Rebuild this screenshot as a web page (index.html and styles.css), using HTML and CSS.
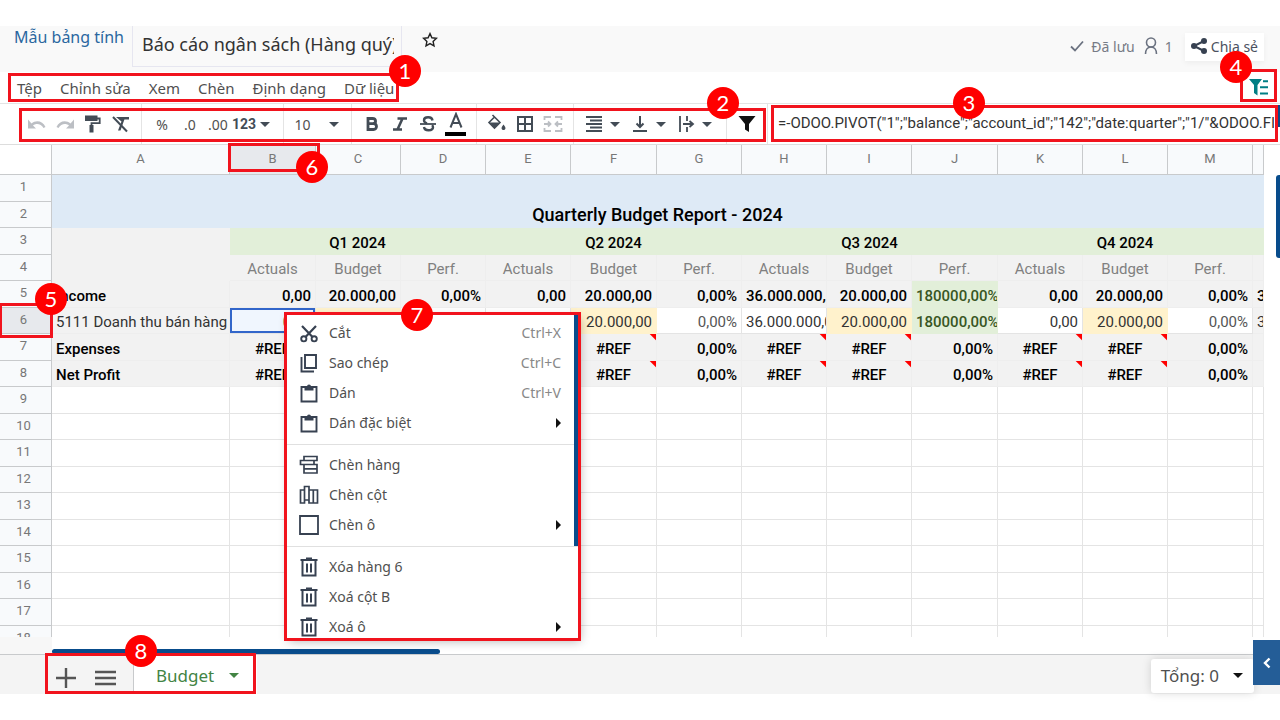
FILE: index.html
```html
<!DOCTYPE html>
<html lang="vi">
<head>
  <meta charset="UTF-8">
  <meta name="viewport" content="width=device-width, initial-scale=1.0">
  <title>Báo cáo ngân sách</title>
  <link rel="stylesheet" href="styles.css">
</head>
<body>
  <div class="app">
    <header class="topbar">
      <a href="#" class="breadcrumb">Mẫu bảng tính</a>
      <input class="doc-name" type="text" aria-label="Tên bảng tính" value="Báo cáo ngân sách (Hàng quý)">
      <button class="star-btn" aria-label="Yêu thích">
        <svg width="16" height="16" viewBox="0 0 16 16"><path d="M8 1.6l1.9 4.2 4.5.5-3.3 3.1.9 4.5L8 11.6l-4 2.3.9-4.5L1.6 6.3l4.5-.5z" fill="none" stroke="#222" stroke-width="1.4"/></svg>
      </button>
      <div class="status">
        <svg width="14" height="12" viewBox="0 0 14 12"><path d="M1 6.5l4 4L13 1.5" fill="none" stroke="#6b7280" stroke-width="1.8"/></svg>
        <span class="saved">Đã lưu</span>
        <svg width="14" height="18" viewBox="0 0 14 18"><circle cx="7" cy="5.5" r="4.5" fill="none" stroke="#6b7280" stroke-width="1.6"/><path d="M1.5 17c0-4 2-7 5.5-7s5.5 3 5.5 7" fill="none" stroke="#6b7280" stroke-width="1.6"/></svg>
        <span>1</span>
      </div>
      <button class="share-btn">
        <svg width="16" height="16" viewBox="0 0 16 16"><path d="M13 3L3 8l10 5" fill="none" stroke="#374151" stroke-width="2"/><circle cx="13" cy="3" r="3" fill="#374151"/><circle cx="3" cy="8" r="3" fill="#374151"/><circle cx="13" cy="13" r="3" fill="#374151"/></svg>
        Chia sẻ
      </button>
    </header>

    <nav class="menubar">
      <button>Tệp</button>
      <button>Chỉnh sửa</button>
      <button>Xem</button>
      <button>Chèn</button>
      <button>Định dạng</button>
      <button>Dữ liệu</button>
      <button class="filter-toggle" aria-label="Bộ lọc">
        <svg width="20" height="17" viewBox="0 0 20 17"><path d="M0 0h13L8.500 6v10.500L5 14V6z" fill="#017e84"/><path d="M14 2.200h5M11 8.200h8M11 14.500h8" stroke="#017e84" stroke-width="2"/></svg>
      </button>
    </nav>

    <div class="toolbar">
      <div class="group">
        <button class="tool" aria-label="Hoàn tác"><svg width="20" height="20" viewBox="0 0 20 20"><path d="M1 5.500v9h8l-3-3c3-2.500 8-2 10.500 2.500l2-1C16 7 9 5.500 4.500 9.500z" fill="#bcbfc4"/></svg></button>
        <button class="tool" aria-label="Làm lại"><svg width="20" height="20" viewBox="0 0 20 20"><path d="M19 5.500v9h-8l3-3c-3-2.500-8-2-10.500 2.500l-2-1C4 7 11 5.500 15.500 9.500z" fill="#bcbfc4"/></svg></button>
        <button class="tool" aria-label="Sao chép định dạng"><svg width="20" height="20" viewBox="0 0 20 20"><path d="M14 4.500h2.700v4.700H8.500V12" fill="none" stroke="#434c56" stroke-width="1.800"/><path d="M2 1.500h12.500v5.500H2zM6.500 11h4v7.500h-4z" fill="#434c56"/></svg></button>
        <button class="tool" aria-label="Xóa định dạng"><svg width="20" height="20" viewBox="0 0 20 20"><path d="M5 3h13v2.600h-4.600L9.500 16.500H7l3.500-9z" fill="#434c56"/><path d="M2 3l14 14.500" stroke="#434c56" stroke-width="2"/></svg></button>
      </div>
      <div class="group">
        <button class="tool text">%</button>
        <button class="tool text">.0</button>
        <button class="tool text">.00</button>
        <button class="tool number">123<i class="caret"></i></button>
      </div>
      <div class="group size-group">
        <button class="tool font-size">10<i class="caret"></i></button>
      </div>
      <div class="group">
        <button class="tool" aria-label="Đậm"><svg width="20" height="20" viewBox="0 0 20 20"><path d="M6 4.500h4.500c4 0 4 5 .5 5.200H6zm0 5.200h5.500c4 0 4 5.800 0 5.800H6z" fill="none" stroke="#434c56" stroke-width="2.800"/></svg></button>
        <button class="tool" aria-label="Nghiêng"><svg width="20" height="20" viewBox="0 0 20 20"><path d="M7.500 4.500H17M3 15.500h9M12.500 4.500l-5 11" fill="none" stroke="#434c56" stroke-width="2.600"/></svg></button>
        <button class="tool" aria-label="Gạch ngang"><svg width="20" height="20" viewBox="0 0 20 20"><path d="M14.500 6.500C14 2 6 2.500 6 6.200c0 1.600 1.200 2.600 3 3.200M6 13c.5 4.500 9 4 9 .2 0-.9-.4-1.600-1-2.100" fill="none" stroke="#434c56" stroke-width="2.400"/><path d="M2 10h16" stroke="#434c56" stroke-width="1.800"/></svg></button>
        <button class="tool" aria-label="Màu chữ"><svg width="22" height="24" viewBox="0 0 22 24"><path d="M5.500 15.500L11 2l5.500 13.500M7.500 11h7" fill="none" stroke="#434c56" stroke-width="2"/><path d="M0 20h21v4H0z" fill="#000"/></svg></button>
      </div>
      <div class="group">
        <button class="tool" aria-label="Màu nền"><svg width="20" height="20" viewBox="0 0 20 20"><path d="M5.500 1l7.500 7.500-5.500 5.500L2 8.500l5-5" fill="none" stroke="#434c56" stroke-width="1.600"/><path d="M2 8.500h11L7.500 14z" fill="#434c56"/><path d="M16.500 10.500c3.500 4 1.500 5.500 0 5.500s-3.500-1.500 0-5.500z" fill="#434c56"/></svg></button>
        <button class="tool" aria-label="Viền"><svg width="20" height="20" viewBox="0 0 20 20"><path d="M3 3h14v14H3zM10 3v14M3 10h14" fill="none" stroke="#434c56" stroke-width="2"/></svg></button>
        <button class="tool" aria-label="Gộp ô"><svg width="20" height="20" viewBox="0 0 20 20"><path d="M1.500 6V3H8M12 3h6.500v3M1.500 14v3H8M12 17h6.500v-3M1 10h6M19 10h-6M5 7.500L7.500 10 5 12.500M15 7.500L12.500 10l2.500 2.500" fill="none" stroke="#bcbfc4" stroke-width="1.800"/></svg></button>
      </div>
      <div class="group drops">
        <button class="tool" aria-label="Căn ngang"><svg width="20" height="20" viewBox="0 0 20 20"><path d="M2 3h16M6 6.500h12M2 10h16M6 13.500h12M2 17h16" stroke="#434c56" stroke-width="1.800"/></svg><i class="caret"></i></button>
        <button class="tool" aria-label="Căn dọc"><svg width="20" height="20" viewBox="0 0 20 20"><path d="M3 17h14M10 2v11M6.500 9.500L10 13l3.500-3.500" fill="none" stroke="#434c56" stroke-width="2"/></svg><i class="caret"></i></button>
        <button class="tool" aria-label="Ngắt dòng"><svg width="20" height="20" viewBox="0 0 20 20"><path d="M4 2v16M11 2v5M11 13v5M7 10h9M13.500 7l3.500 3-3.500 3" fill="none" stroke="#434c56" stroke-width="1.800"/></svg><i class="caret"></i></button>
      </div>
      <div class="group">
        <button class="tool" aria-label="Lọc"><svg width="20" height="20" viewBox="0 0 20 20"><path d="M1.500 2h17L12 10v8l-4-2.500V10z" fill="#111"/></svg></button>
      </div>
      <input class="formula" type="text" aria-label="Công thức" value='=-ODOO.PIVOT("1";"balance";"account_id";"142";"date:quarter";"1/"&amp;ODOO.FIL'>
    </div>

    <main class="sheet">
      <div class="grid-area">
        <table class="grid">
          <colgroup id="cols"></colgroup>
          <thead><tr id="head"></tr></thead>
          <tbody id="rows"></tbody>
        </table>
      </div>
      <div class="v-track"><div class="v-thumb"></div></div>
      <div class="h-track"><div class="h-thumb"></div></div>
    </main>

    <footer class="bottombar">
      <button class="sheet-btn" aria-label="Thêm trang"><svg width="22" height="22" viewBox="0 0 22 22"><path d="M11 1v20M1 11h20" stroke="#555" stroke-width="2.400"/></svg></button>
      <button class="sheet-btn" aria-label="Danh sách trang"><svg width="22" height="22" viewBox="0 0 22 22"><path d="M1 5h21M1 11h21M1 17h21" stroke="#555" stroke-width="2.400"/></svg></button>
      <button class="sheet-tab">Budget<i class="caret"></i></button>
      <button class="total">Tổng: 0<i class="caret"></i></button>
    </footer>

    <div class="context-menu">
      <div class="menu-group">
        <button><svg width="20" height="20" viewBox="0 0 20 20"><path d="M3 3l10.500 11M17 3L6.500 14" stroke="#374151" stroke-width="2.200"/><circle cx="4.800" cy="15.800" r="2.600" fill="none" stroke="#374151" stroke-width="1.900"/><circle cx="15.200" cy="15.800" r="2.600" fill="none" stroke="#374151" stroke-width="1.900"/></svg><span>Cắt</span><kbd>Ctrl+X</kbd></button>
        <button><svg width="20" height="20" viewBox="0 0 20 20"><path d="M6 2h11v13H6zM2.500 4v14.500H15" fill="none" stroke="#374151" stroke-width="1.900"/></svg><span>Sao chép</span><kbd>Ctrl+C</kbd></button>
        <button><svg width="20" height="20" viewBox="0 0 20 20"><path d="M2.500 4h15v14.500h-15z" fill="none" stroke="#374151" stroke-width="1.900"/><path d="M5.500 3.500H8a2 2 0 0 1 4 0h2.500V7.500h-9z" fill="#374151"/></svg><span>Dán</span><kbd>Ctrl+V</kbd></button>
        <button><svg width="20" height="20" viewBox="0 0 20 20"><path d="M2.500 4h15v14.500h-15z" fill="none" stroke="#374151" stroke-width="1.900"/><path d="M5.500 3.500H8a2 2 0 0 1 4 0h2.500V7.500h-9z" fill="#374151"/></svg><span>Dán đặc biệt</span><i class="arrow"></i></button>
      </div>
      <div class="menu-group">
        <button><svg width="20" height="20" viewBox="0 0 20 20"><path d="M5 1.500h13v4H5zM1.500 5.500H15v4H1.500zM5 9.500h13v4.300H5zM5 13.800h13v4.200H5z" fill="none" stroke="#374151" stroke-width="1.700"/></svg><span>Chèn hàng</span></button>
        <button><svg width="20" height="20" viewBox="0 0 20 20"><path d="M1.500 5h4v13h-4zM5.500 1.500h4.500V15H5.500zM10 5h4.300v13H10zM14.300 5h4.200v13h-4.200z" fill="none" stroke="#374151" stroke-width="1.700"/></svg><span>Chèn cột</span></button>
        <button><svg width="20" height="20" viewBox="0 0 20 20"><path d="M1 1h18v18H1z" fill="none" stroke="#374151" stroke-width="1.800"/></svg><span>Chèn ô</span><i class="arrow"></i></button>
      </div>
      <div class="menu-group">
        <button><svg width="20" height="20" viewBox="0 0 20 20"><path d="M3.500 3.500v15h13v-15M1.500 3h17M7 1.500h6M8 6.500v9M12 6.500v9" fill="none" stroke="#374151" stroke-width="2"/></svg><span>Xóa hàng 6</span></button>
        <button><svg width="20" height="20" viewBox="0 0 20 20"><path d="M3.500 3.500v15h13v-15M1.500 3h17M7 1.500h6M8 6.500v9M12 6.500v9" fill="none" stroke="#374151" stroke-width="2"/></svg><span>Xoá cột B</span></button>
        <button><svg width="20" height="20" viewBox="0 0 20 20"><path d="M3.500 3.500v15h13v-15M1.500 3h17M7 1.500h6M8 6.500v9M12 6.500v9" fill="none" stroke="#374151" stroke-width="2"/></svg><span>Xoá ô</span><i class="arrow"></i></button>
      </div>
      <div class="menu-thumb"></div>
    </div>

    <div class="f-thumb"></div>
    <button class="side-toggle" aria-label="Mở bảng bên"><svg width="10" height="12" viewBox="0 0 10 12"><path d="M7.500 1.500L3 6l4.500 4.500" fill="none" stroke="#fff" stroke-width="2.400"/></svg></button>

    <div class="mark mark-1"><b>1</b></div>
    <div class="mark mark-2"><b>2</b></div>
    <div class="mark mark-3"><b>3</b></div>
    <div class="mark mark-4"><b>4</b></div>
    <div class="mark mark-5"><b>5</b></div>
    <div class="mark mark-6"><b>6</b></div>
    <div class="mark mark-7"><b>7</b></div>
    <div class="mark mark-8"><b>8</b></div>
  </div>

  <script>
    const letters = "ABCDEFGHIJKLMN".split("");
    const zero = "0,00";
    const budget = "20.000,00";
    const pct = "0,00%";
    const big = "36.000.000,00";
    const jump = "180000,00%";

    // [text, classes, colspan]
    const quarters = ["Q1 2024", "Q2 2024", "Q3 2024", "Q4 2024"].map(q => [q, "green bold center", 3]);
    const labels = [];
    for (let i = 0; i < 4; i++) {
      labels.push(["Actuals", "grey label"], ["Budget", "grey label"], ["Perf.", "grey label"]);
    }
    const n = "grey bold num";
    const refs = [];
    for (let i = 0; i < 4; i++) {
      refs.push(["#REF", "grey bold error"], ["#REF", "grey bold error"], [pct, n]);
    }

    const data = [
      [["", "blue", 14]],
      [["Quarterly Budget Report - 2024", "blue title", 14]],
      [["", "grey blank"], ...quarters, ["", "green"]],
      [["", "grey blank"], ...labels, ["", "grey"]],
      [["Income", "grey bold"], [zero, n], [budget, n], [pct, n], [zero, n], [budget, n], [pct, n],
        [big, "grey bold"], [budget, n], [jump, "good"], [zero, n], [budget, n], [pct, n], ["36", "grey bold"]],
      [["5111 Doanh thu bán hàng", "grey"], [zero, "num selected"], [budget, "num yellow"], [pct, "num"], [zero, "num"],
        [budget, "num yellow"], [pct, "num soft"], [big, ""], [budget, "num yellow"], [jump, "good"], [zero, "num"],
        [budget, "num yellow"], [pct, "num soft"], ["36", "grey"]],
      [["Expenses", "grey bold"], ...refs, ["", "grey"]],
      [["Net Profit", "grey bold"], ...refs, ["", "grey"]]
    ];

    const cols = document.getElementById("cols");
    cols.innerHTML = '<col class="col-index"><col class="col-a">' + '<col class="col-n">'.repeat(12) + "<col>";

    const head = document.getElementById("head");
    head.appendChild(document.createElement("td"));
    letters.forEach(letter => {
      const th = document.createElement("th");
      th.textContent = letter === "N" ? "" : letter;
      if (letter === "B") th.className = "active";
      head.appendChild(th);
    });

    const rows = document.getElementById("rows");
    for (let r = 0; r < 18; r++) {
      const tr = document.createElement("tr");
      const th = document.createElement("th");
      th.textContent = r + 1;
      if (r === 5) th.className = "active";
      tr.appendChild(th);
      const cells = data[r] || letters.map(() => ["", ""]);
      cells.forEach(([text, cls, span]) => {
        const td = document.createElement("td");
        td.textContent = text;
        td.className = cls;
        if (span) td.colSpan = span;
        tr.appendChild(td);
      });
      rows.appendChild(tr);
    }
  </script>
</body>
</html>
```
FILE: styles.css
```css
* {
  box-sizing: border-box;
}

body {
  margin: 0;
  background: #fff;
  color: #505050;
  font-family: "Noto Sans", sans-serif;
  font-size: 14px;
}

button,
input {
  margin: 0;
  padding: 0;
  border: none;
  background: none;
  color: inherit;
  font: inherit;
}

button {
  display: flex;
  align-items: center;
  justify-content: center;
  white-space: nowrap;
  cursor: pointer;
}

svg {
  display: block;
  flex: none;
}

.app {
  position: relative;
  display: flex;
  flex-direction: column;
  height: 100vh;
  padding: 26px 0;
  overflow: hidden;
}

/* top bar */
.topbar {
  display: flex;
  align-items: flex-start;
  flex: none;
  height: 46px;
  padding: 0 16px 0 14px;
  background: #f9f9f9;
}

.breadcrumb {
  width: 118px;
  color: #2a679f;
  font-size: 16px;
  line-height: 22px;
  white-space: nowrap;
  text-decoration: none;
}

.doc-name {
  width: 270px;
  height: 41px;
  padding: 0 7px 4px 9px;
  border: 1px solid #e6e6f0;
  border-top: none;
  color: #333;
  font-size: 18px;
}

.star-btn {
  margin: 6px 0 0 20px;
}

.status {
  display: flex;
  align-items: center;
  gap: 7px;
  height: 40px;
  margin-left: auto;
  color: #777b86;
}

.saved {
  margin-right: 2px;
}

.share-btn {
  gap: 4px;
  height: 28px;
  margin: 7px 0 0 12px;
  padding: 0 6px 2px;
  background: #fff;
  box-shadow: 0 2px 6px #0000000d;
  color: #4b5160;
}

/* menus */
.menubar {
  display: flex;
  align-items: center;
  flex: none;
  gap: 18px;
  height: 32px;
  padding: 0 11px 0 17px;
  border-bottom: 1px solid #e4e4e4;
  font-size: 15px;
}

.filter-toggle {
  margin-left: auto;
}

/* toolbar */
.toolbar {
  display: flex;
  flex: none;
  height: 41px;
  padding: 0 6px 0 17px;
  border-bottom: 1px solid #ddd;
}

.group {
  display: flex;
  align-items: center;
  flex: none;
  padding: 0 6px;
  border-right: 1px solid #e4e4e4;
}

.tool {
  width: 28px;
  height: 30px;
}

.number {
  width: 38px;
  margin-right: 7px;
  gap: 4px;
  color: #434c56;
  font-family: Roboto, sans-serif;
  font-weight: bold;
}

.font-size {
  width: 55px;
  gap: 18px;
}

.size-group {
  padding: 0 7px 0 5px;
}

.drops {
  gap: 2px;
  padding-right: 10px;
}

.drops .tool {
  width: 44px;
  gap: 6px;
}

.caret {
  flex: none;
  border: 5px solid transparent;
  border-top-color: #434c56;
  border-bottom: none;
}

.formula {
  flex: 1;
  min-width: 0;
  margin: 0;
  padding: 0 0 2px 10px;
  color: #333;
  font-family: Roboto, sans-serif;
  font-size: 15px;
}

/* spreadsheet */
.sheet {
  display: grid;
  grid-template: 1fr 17px / 1fr 16px;
  flex: 1;
  min-height: 0;
}

.grid-area {
  overflow: hidden;
}

.grid {
  width: 100%;
  table-layout: fixed;
  border-collapse: separate;
  border-spacing: 0;
  color: #333;
  font-family: Roboto, sans-serif;
  font-size: 15px;
}

.col-index {
  width: 52px;
}

.col-a {
  width: 178px;
}

.col-n {
  width: 85px;
}

.col-n:nth-child(4n + 3) {
  width: 86px;
}

.grid th {
  padding: 0 4px 3px 0;
  border-right: 1px solid #c8cacc;
  border-bottom: 1px solid #c8cacc;
  background: #f8fafc;
  color: #777;
  font-size: 13px;
  font-weight: normal;
}

.grid thead tr {
  height: 30px;
}

.grid thead td {
  border-color: #c8cacc;
}

.grid thead th {
  padding: 0 0 2px;
}

.grid th.active {
  background: #e7e9ed;
}

.grid tbody tr {
  height: 27px;
}

.grid tbody tr:nth-child(even) {
  height: 26px;
}

.grid td {
  position: relative;
  padding: 3px 4px 0;
  border-right: 1px solid #e4e4e4;
  border-bottom: 1px solid #e4e4e4;
  line-height: 20px;
  white-space: nowrap;
  overflow: hidden;
}

.grid .blue {
  border-color: #deeaf6;
  background: #deeaf6;
}

.grid .title {
  padding-top: 0;
  color: #000;
  font-size: 18px;
  font-weight: 500;
  text-align: center;
}

.grid .grey {
  border-color: #eee;
  background: #f2f2f2;
}

.grid .blank {
  border-color: #f2f2f2;
}

.grid .green {
  border-color: #e2efd9;
  background: #e2efd9;
}

.grid .yellow {
  border-color: #fff2cc;
  background: #fff2cc;
}

.grid .good {
  border-color: #e2efd9;
  background: #e2efd9;
  color: #385623;
  font-weight: 500;
}

.grid .bold {
  color: #000;
  font-weight: 500;
}

.grid .center {
  text-align: center;
}

.grid .label {
  color: #808080;
  text-align: center;
}

.grid .num {
  text-align: right;
}

.grid .soft {
  color: #555;
}

.grid .error {
  background: linear-gradient(225deg, #f00 4px, #f2f2f2 5px);
  text-align: center;
}

.grid .selected {
  background: #f0f6fe;
  box-shadow: inset 0 0 0 2px #3266ca;
}

.v-track {
  padding: 30px 0 0 12px;
}

.v-thumb {
  height: 83px;
  border-radius: 3px 0 0 3px;
  background: #084c8c;
}

.h-track {
  display: flex;
  align-items: flex-end;
  grid-column: 1 / 3;
  border-left: 52px solid #f7f7f7;
}

.h-thumb {
  width: 388px;
  height: 5px;
  border-radius: 3px;
  background: #084c8c;
}

/* bottom bar */
.bottombar {
  display: flex;
  flex: none;
  height: 40px;
  padding-left: 46px;
  border-top: 1px solid #c8cacc;
  background: #f4f4f4;
}

.sheet-btn {
  width: 39px;
  padding-top: 6px;
}

.sheet-tab {
  gap: 15px;
  margin-left: 9px;
  padding: 2px 18px 0 22px;
  border-left: 1px solid #c8cacc;
  background: #fff;
  color: #428444;
  font-size: 17px;
}

.sheet-tab .caret {
  border-top-color: #428444;
}

.total {
  gap: 14px;
  height: 34px;
  margin: 4px 26px 0 auto;
  padding: 0 11px 2px 10px;
  border-radius: 3px;
  background: #fff;
  box-shadow: 0 0 10px #00000026;
  font-size: 17px;
}

.total .caret {
  border-top-color: #111;
}

/* context menu */
.context-menu {
  position: absolute;
  top: 315px;
  left: 287px;
  width: 291px;
  height: 323px;
  padding-top: 3px;
  overflow: hidden;
  background: #fff;
  box-shadow: 2px 3px 10px #0000004d;
}

.menu-group + .menu-group {
  margin-top: 6px;
  padding-top: 5px;
  border-top: 1px solid #e0e0e0;
}

.context-menu button {
  justify-content: flex-start;
  gap: 10px;
  width: 100%;
  height: 30px;
  padding: 0 17px 0 12px;
}

.context-menu span,
.context-menu kbd {
  padding-bottom: 2px;
}

.context-menu kbd {
  margin-left: auto;
  color: #888;
  font: inherit;
}

.arrow {
  margin-left: auto;
  border: 5px solid transparent;
  border-left-color: #111;
  border-right: none;
}

.menu-thumb {
  position: absolute;
  top: 0;
  right: 0;
  width: 4px;
  height: 231px;
  background: #084c8c;
}

.f-thumb {
  position: absolute;
  top: 105px;
  right: 0;
  width: 2px;
  height: 22px;
  background: #084c8c;
}

.side-toggle {
  position: absolute;
  right: 0;
  bottom: 35px;
  width: 27px;
  height: 45px;
  background: #245d97;
}

/* numbered callouts */
.mark {
  position: absolute;
  border: 3px solid #f1131d;
  pointer-events: none;
}

.mark b {
  position: absolute;
  width: 32px;
  height: 32px;
  border-radius: 50%;
  background: #f00;
  color: #fff;
  font: 22px/32px Lato, sans-serif;
  text-align: center;
}

.mark-1 {
  top: 73px;
  left: 8px;
  width: 391px;
  height: 29px;
}

.mark-1 b {
  top: -21px;
  right: -25px;
}

.mark-2 {
  top: 108px;
  left: 19px;
  width: 747px;
  height: 34px;
}

.mark-2 b {
  top: -24px;
  right: 24px;
}

.mark-3 {
  top: 105px;
  left: 771px;
  right: 2px;
  height: 37px;
}

.mark-3 b {
  top: -21px;
  left: 179px;
}

.mark-4 {
  top: 69px;
  right: 3px;
  width: 37px;
  height: 33px;
}

.mark-4 b {
  top: -21px;
  left: -23px;
}

.mark-5 {
  top: 303px;
  left: -1px;
  width: 54px;
  height: 35px;
}

.mark-5 b {
  top: -23px;
  right: -17px;
}

.mark-6 {
  top: 143px;
  left: 228px;
  width: 92px;
  height: 29px;
}

.mark-6 b {
  top: 5px;
  right: -11px;
}

.mark-7 {
  top: 312px;
  left: 284px;
  width: 297px;
  height: 329px;
}

.mark-7 b {
  top: -16px;
  left: 114px;
}

.mark-8 {
  bottom: 26px;
  left: 45px;
  width: 211px;
  height: 41px;
}

.mark-8 b {
  top: -21px;
  left: 77px;
}
```
